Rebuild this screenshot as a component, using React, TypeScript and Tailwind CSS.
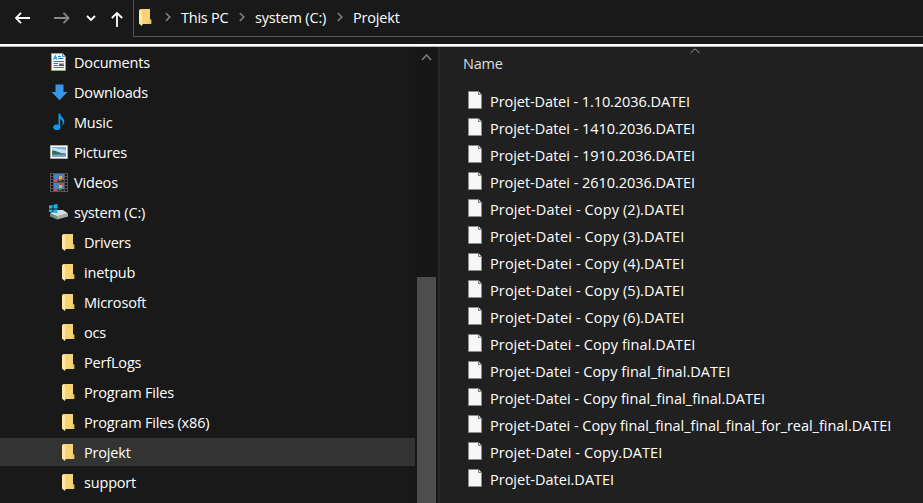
import type { ReactNode } from "react";

function Folder() {
  return (
    <svg width="13" height="18" viewBox="0 0 13 18" className="block shrink-0">
      <path d="M1 0H11V10.500H12.200V15H1Z" fill="#f5d376" />
      <path d="M10 10.500H12.200V15H9Z" fill="#efc75f" />
      <path d="M0 .5L4 2.800V14.500L2.800 17L0 14.500Z" fill="#ffe8a3" />
      <path d="M3.500 2.500V15" stroke="#edc765" strokeWidth=".6" />
    </svg>
  );
}

function FileIcon() {
  return (
    <svg width="15" height="19" viewBox="0 0 15 19" className="mb-0.5 block shrink-0">
      <path d="M.5.500H10.500L13.500 3.500V17.500H.5Z" fill="#f6f7f8" stroke="#8c8c8c" />
      <path d="M10.500.5V3.500H13.500" fill="#dfe1e2" stroke="#777" />
    </svg>
  );
}

function DocumentsIcon() {
  return (
    <svg width="16" height="18" viewBox="0 0 16 18">
      <path d="M.5.500H11.500L14.500 3.500V17.500H.5Z" fill="#f7f7f7" stroke="#9a9a9a" />
      <path d="M11.500.5V3.500H14.500" fill="#d5d5d5" stroke="#888" />
      <path d="M2.500 6.500L4.500 2.500L5.500 6.500M3.300 5.500H5.500M7 3.500H10M7 5.500H12.500M2.500 8.500H13M2.500 12.500H7M2.500 14.500H13M2.500 10.500H7" stroke="#1684c6" fill="none" />
      <path d="M8 10H13V13H8Z" fill="#78b4e8" />
      <path d="M8 12L10 11L13 12V13H8Z" fill="#294f68" />
    </svg>
  );
}

function DownloadIcon() {
  return (
    <svg width="17" height="17" viewBox="0 0 17 17">
      <path d="M4.500.5H12.500V8H16.500L8.500 16.300L.5 8H4.500Z" fill="#3995e5" />
    </svg>
  );
}

function MusicIcon() {
  return (
    <svg width="13" height="18" viewBox="0 0 13 18">
      <ellipse cx="3.800" cy="14.300" rx="3.500" ry="2.800" fill="#0a9cf5" />
      <path d="M5.500 14V.5H7.200C7.500 4 11.500 5 11.300 8.800C11.200 10.500 10.300 12 9.300 12.800C10.200 9.500 10 7.500 7.200 6V14.500Z" fill="#0a9cf5" />
    </svg>
  );
}

function PicturesIcon() {
  return (
    <svg width="18" height="14" viewBox="0 0 18 14">
      <path d="M.5.500H17.500V13.500H.5Z" fill="#fff" stroke="#aaa" />
      <path d="M2 2H16V12H2Z" fill="#78b4e8" />
      <path d="M2 3.500C5 2 7 4 10 4S14 5.500 16 5V8H2Z" fill="#c9e0f2" />
      <path d="M2 5.500C5 5 8 7 11 8L16 9V10H2Z" fill="#356961" />
      <path d="M2 9.500H16V12H2Z" fill="#78a5bc" />
    </svg>
  );
}

function VideosIcon() {
  return (
    <svg width="18" height="19" viewBox="0 0 18 19">
      <path d="M0 0H18V19H0Z" fill="#555" />
      <path d="M2 1V18M16 1V18" stroke="#161616" strokeWidth="2" strokeDasharray="2 1" />
      <path d="M4 1H14V9H4ZM4 10H14V18H4Z" fill="#4b80ca" />
      <path d="M4 6L7 7V9H4ZM4 15L7 16V18H4Z" fill="#bd5366" />
      <path d="M9 3H12V6H9ZM9 12H12V15H9Z" fill="#d9b52e" />
      <path d="M8 5H9V7H8ZM12 5H13V7H12ZM9 10H13V12H9Z" fill="#c5483a" />
      <path d="M8 7H14V9H7ZM8 16H14V18H7Z" fill="#263b2d" />
      <path d="M9 7H11V8H9ZM9 16H11V17H9Z" fill="#829543" />
    </svg>
  );
}

function DriveIcon() {
  return (
    <svg width="20" height="16" viewBox="0 0 20 16">
      <path d="M1 9.500L8 6H14L19 9.500L8 12.500Z" fill="#d9dddd" />
      <path d="M1 9.500L8 12V15.500L1 12.500Z" fill="#7c8080" />
      <path d="M8 12L19 9.500V12.500L8 15.500Z" fill="#a9adad" />
      <path d="M4.500 11.700L6.800 12.500V13.700L4.500 12.900Z" fill="#3bd33b" />
      <path d="M0 1.500L3.500 1V4.500H0ZM4.500.8L8.500 0V4.500H4.500ZM0 5.500H3.500V8.500L0 8ZM4.500 5.500H8.500V9.300L4.500 8.700Z" fill="#16b8f3" />
    </svg>
  );
}

function Crumb() {
  return (
    <svg width="6" height="10" viewBox="0 0 6 10" fill="none" stroke="#858585" strokeWidth="1.500" className="mb-0.5">
      <path d="M.8 1L4.800 5L.8 9" />
    </svg>
  );
}

const places: { name: string; icon: ReactNode }[] = [
  { name: "Documents", icon: <DocumentsIcon /> },
  { name: "Downloads", icon: <DownloadIcon /> },
  { name: "Music", icon: <MusicIcon /> },
  { name: "Pictures", icon: <PicturesIcon /> },
  { name: "Videos", icon: <VideosIcon /> },
  { name: "system (C:)", icon: <DriveIcon /> },
];

const folders = ["Drivers", "inetpub", "Microsoft", "ocs", "PerfLogs", "Program Files", "Program Files (x86)", "Projekt", "support"];

const files = [
  { name: "Projet-Datei - 1.10.2036.DATEI", tracking: "tracking-[-0.07px]" },
  { name: "Projet-Datei - 1410.2036.DATEI", tracking: "tracking-[-0.05px]" },
  { name: "Projet-Datei - 1910.2036.DATEI", tracking: "tracking-[-0.05px]" },
  { name: "Projet-Datei - 2610.2036.DATEI", tracking: "tracking-[-0.05px]" },
  { name: "Projet-Datei - Copy (2).DATEI", tracking: "tracking-[0.12px]" },
  { name: "Projet-Datei - Copy (3).DATEI", tracking: "tracking-[0.12px]" },
  { name: "Projet-Datei - Copy (4).DATEI", tracking: "tracking-[0.12px]" },
  { name: "Projet-Datei - Copy (5).DATEI", tracking: "tracking-[0.12px]" },
  { name: "Projet-Datei - Copy (6).DATEI", tracking: "tracking-[0.12px]" },
  { name: "Projet-Datei - Copy final.DATEI", tracking: "tracking-[0.07px]" },
  { name: "Projet-Datei - Copy final_final.DATEI", tracking: "tracking-[0.04px]" },
  { name: "Projet-Datei - Copy final_final_final.DATEI", tracking: "tracking-[0.02px]" },
  { name: "Projet-Datei - Copy final_final_final_final_for_real_final.DATEI", tracking: "tracking-[-0.03px]" },
  { name: "Projet-Datei - Copy.DATEI", tracking: "tracking-[0.08px]" },
  { name: "Projet-Datei.DATEI", tracking: "tracking-normal" },
];

export default function App() {
  return (
    <div className="flex h-[503px] w-[923px] flex-col overflow-hidden bg-[#191919] font-['Open_Sans','Noto_Sans',sans-serif] text-[14.500px] whitespace-nowrap text-white">
      <header className="flex h-11 shrink-0">
        <nav className="flex h-[37px] w-[133px] shrink-0 items-center pl-[15px]">
          <svg width="16" height="12" viewBox="0 0 16 12" fill="none" stroke="#fff" strokeWidth="1.800" className="mb-px"><path d="M6 .8L1 6L6 11.200M1 6H15" /></svg>
          <svg width="16" height="12" viewBox="0 0 16 12" fill="none" stroke="#898989" strokeWidth="1.800" className="mb-px ml-[23px]"><path d="M9.500.8L14.500 6L9.500 11.200M14.500 6H0" /></svg>
          <svg width="10" height="7" viewBox="0 0 10 7" fill="none" stroke="#fff" strokeWidth="1.900" className="mb-px ml-4"><path d="M1 1L5 5L9 1" /></svg>
          <svg width="12" height="16" viewBox="0 0 12 16" fill="none" stroke="#fff" strokeWidth="1.800" className="mt-0.5 ml-[15px]"><path d="M.8 6L6 1L11.200 6M6 1V15" /></svg>
        </nav>
        <div className="flex h-[37px] flex-1 items-center border-b border-l border-[#555] pl-[5px] tracking-[-0.18px]">
          <Folder />
          <span className="ml-[13px]"><Crumb /></span>
          <span className="ml-[10px] w-[58px] tracking-[-0.25px]">This PC</span>
          <Crumb />
          <span className="ml-[10px] w-[82px]">system (C:)</span>
          <Crumb />
          <span className="ml-[10px]">Projekt</span>
        </div>
      </header>
      <div className="h-[3px] shrink-0 border-b border-[#b5b5b5] bg-white" />
      <main className="flex min-h-0 flex-1">
        <aside className="w-[415px] overflow-hidden tracking-[-0.18px]">
          {places.map((p) => (
            <div key={p.name} className="flex h-[30px] items-center pl-12">
              <span className="flex w-[22px] justify-center">{p.icon}</span>
              <span className="ml-1 pt-0.5">{p.name}</span>
            </div>
          ))}
          {folders.map((name) => (
            <div key={name} className="flex h-[30px] items-center py-px">
              <div className={`flex h-7 w-full items-center pl-[62px] ${name === "Projekt" ? "bg-[#333]" : ""}`}>
                <span className="pt-0.5"><Folder /></span>
                <span className="ml-[9px] pt-0.5">{name}</span>
              </div>
            </div>
          ))}
        </aside>
        <div className="flex w-[23px] flex-col bg-[#171717] pl-0.5">
          <svg width="19" height="20" viewBox="0 0 19 20" fill="none" stroke="#777" strokeWidth="1.800"><path d="M5 13L9.500 8L14 13" /></svg>
          <div className="mt-[210px] w-[19px] flex-1 bg-[#4d4d4d]" />
        </div>
        <section className="flex flex-1 flex-col border-l-2 border-[#292929] bg-[#202020]">
          <div className="flex h-[41px] shrink-0 items-start pl-[23px] text-[#dedede]">
            <span className="w-[227px] pt-[6px] tracking-[-0.2px]">Name</span>
            <svg width="10" height="6" viewBox="0 0 10 6" fill="none" stroke="#999" className="mt-px"><path d="M.5 5L5 .8L9.500 5" /></svg>
          </div>
          {files.map((file) => (
            <div key={file.name} className="flex h-[27px] shrink-0 items-center pl-7">
              <FileIcon />
              <span className={`ml-[7px] ${file.tracking}`}>{file.name}</span>
            </div>
          ))}
        </section>
      </main>
    </div>
  );
}
